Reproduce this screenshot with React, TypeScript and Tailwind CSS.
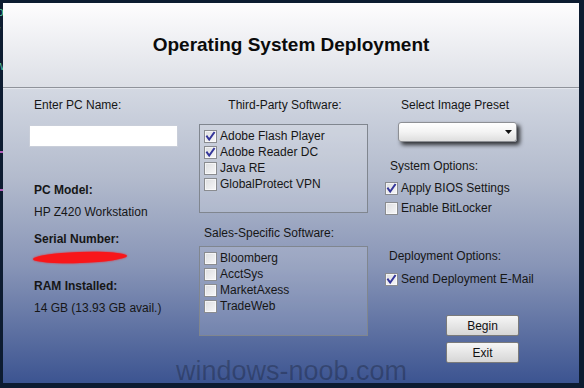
import type { ReactNode } from 'react'

const FONT = { fontFamily: '"Liberation Sans", Arial, sans-serif' }

function Check({ checked }: { checked?: boolean }) {
  return (
    <span className="relative w-[13px] h-[13px] shrink-0 border border-[#8a8c90] bg-[linear-gradient(135deg,#dcdde0,#f7f7f8)] shadow-[inset_0_0_0_1px_rgba(255,255,255,0.6)]">
      {checked && (
        <svg viewBox="0 0 11 11" className="absolute inset-0 w-[11px] h-[11px]">
          <path d="M2 5.5 L4.2 8.6 L9 1.8" fill="none" stroke="#34369a" strokeWidth="2" strokeLinecap="square" />
        </svg>
      )}
    </span>
  )
}

function Item({ label, checked }: { label: string; checked?: boolean }) {
  return (
    <div className="flex items-center gap-[3px] h-4 leading-4">
      <Check checked={checked} />
      <span>{label}</span>
    </div>
  )
}

function ListBox({ children, height }: { children: ReactNode; height: string }) {
  return (
    <div className={`border border-[#80868f] bg-white/15 pl-[4px] pt-[3px] ${height}`}>
      {children}
    </div>
  )
}

function WinButton({ label }: { label: string }) {
  return (
    <button className="ml-[61px] w-[73px] h-[21px] rounded-[2px] border border-[#7a7a7a] bg-[linear-gradient(to_bottom,#f6f6f6,#e6e6e6_50%,#d6d6d6)] text-[12px] text-[#111] leading-none">
      {label}
    </button>
  )
}

export default function App() {
  return (
    <div className="w-[584px] h-[388px] bg-[#0d1c31] flex overflow-hidden" style={FONT}>
      {/* bits of the desktop behind the window */}
      <div className="w-[3px] shrink-0 overflow-hidden text-[12px] leading-4 text-[#4fbf9f]">
        <div className="-ml-[3px] mt-[4px]">o</div>
        <div className="-ml-[3px] mt-[4px]">/</div>
        <div className="-ml-[4px]">t</div>
        <div className="-ml-[4px] mt-[2px]">w</div>
        <div className="mt-[77px] h-[2px] bg-[#b05fb8]" />
        <div className="mt-[36px] h-[2px] bg-[#b05fb8]" />
        <div className="-ml-[4px] mt-[3px] text-[#e6e6e6]">t</div>
      </div>

      <div className="relative mt-[3px] w-[576px] h-[380px] shrink-0 flex flex-col text-[12px] text-[#161616] overflow-hidden">
        <div className="h-[85px] shrink-0 flex items-center justify-center bg-[linear-gradient(to_bottom,#fefdfe,#dcdfe6)] border-b border-[#8f939b]">
          <h1 className="text-[19px] font-bold text-[#0b0b0b] mt-[1px]">Operating System Deployment</h1>
        </div>

        <div className="flex-1 flex pl-[26px] pt-[8px] bg-[linear-gradient(to_bottom,#d3d8e2,#b3bbcd_30%,#8895b7_60%,#3c5491)] border-t border-[#e3e6ed]">
          {/* left */}
          <div className="w-[149px] flex flex-col leading-4">
            <div className="pl-[5px]">Enter PC Name:</div>
            <div className="mt-[12px] h-[22px] bg-white border border-[#c9ced9]" />
            <div className="pl-[5px] mt-[35px] font-bold">PC Model:</div>
            <div className="pl-[5px] mt-[6px]">HP Z420 Workstation</div>
            <div className="pl-[5px] mt-[11px] font-bold">Serial Number:</div>
            <div className="ml-[4px] mt-[5px] w-[94px] h-[11px] rounded-[50%] bg-[#f8161a] -rotate-2 shadow-[0_0_2px_#f8161a]" />
            <div className="pl-[5px] mt-[15px] font-bold">RAM Installed:</div>
            <div className="pl-[5px] mt-[6px]">14 GB (13.93 GB avail.)</div>
          </div>

          {/* middle */}
          <div className="ml-[21px] w-[169px] flex flex-col leading-4">
            <div className="text-center pl-[3px]">Third-Party Software:</div>
            <div className="mt-[11px]">
              <ListBox height="h-[89px]">
                <Item label="Adobe Flash Player" checked />
                <Item label="Adobe Reader DC" checked />
                <Item label="Java RE" />
                <Item label="GlobalProtect VPN" />
              </ListBox>
            </div>
            <div className="pl-[5px] mt-[12px]">Sales-Specific Software:</div>
            <div className="mt-[5px]">
              <ListBox height="h-[90px]">
                <Item label="Bloomberg" />
                <Item label="AcctSys" />
                <Item label="MarketAxess" />
                <Item label="TradeWeb" />
              </ListBox>
            </div>
          </div>

          {/* right */}
          <div className="ml-[17px] w-[140px] flex flex-col leading-4">
            <div className="text-center">Select Image Preset</div>
            <div className="ml-[13px] mt-[9px] w-[119px] h-[20px] rounded-[3px] border border-[#8d8f94] bg-[linear-gradient(to_bottom,#ffffff,#f3f3f3_50%,#dedede)] shadow-[3px_3px_4px_rgba(0,0,0,0.75)] flex items-center justify-end pr-[4px]">
              <svg viewBox="0 0 7 4" className="w-[7px] h-[4px]">
                <path d="M0 0 H7 L3.5 4 Z" fill="#111" />
              </svg>
            </div>
            <div className="pl-[5px] mt-[16px]">System Options:</div>
            <div className="mt-[6px]"><Item label="Apply BIOS Settings" checked /></div>
            <div className="mt-[4px]"><Item label="Enable BitLocker" /></div>
            <div className="pl-[4px] mt-[32px]">Deployment Options:</div>
            <div className="mt-[7px] whitespace-nowrap"><Item label="Send Deployment E-Mail" checked /></div>
            <div className="mt-[28px]"><WinButton label="Begin" /></div>
            <div className="mt-[6px]"><WinButton label="Exit" /></div>
          </div>
        </div>

        <div className="absolute left-[173px] top-[355px] text-[27px] leading-none text-black/25 pointer-events-none">
          windows-noob.com
        </div>
      </div>
    </div>
  )
}
